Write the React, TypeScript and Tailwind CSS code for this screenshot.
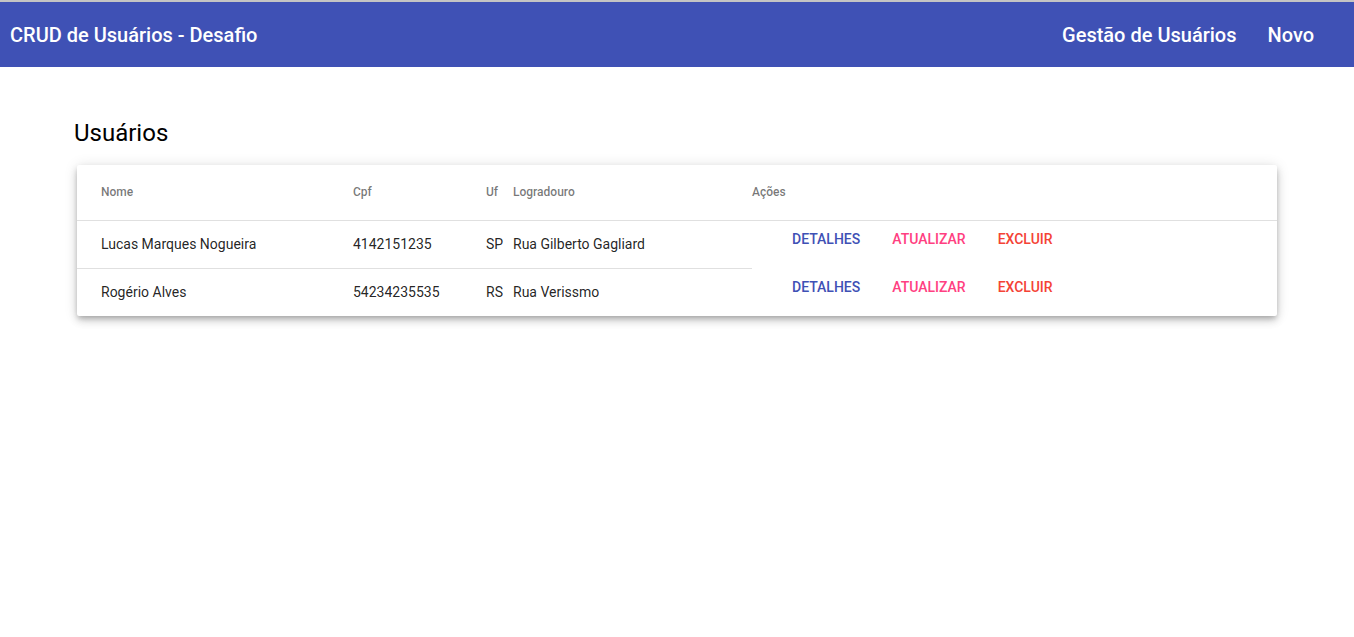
import React from "react";

interface Usuario {
  id: number;
  nome: string;
  cpf: string;
  uf: string;
  logradouro: string;
}

const usuarios: Usuario[] = [
  { id: 1, nome: "Lucas Marques Nogueira", cpf: "4142151235", uf: "SP", logradouro: "Rua Gilberto Gagliard" },
  { id: 2, nome: "Rogério Alves", cpf: "54234235535", uf: "RS", logradouro: "Rua Verissmo" },
];

const App = () => {
  return (
    <div className="min-h-screen bg-white font-['Roboto','Liberation_Sans',sans-serif]">
      {/* app bar */}
      <div className="border-t-2 border-[#c4c4c4] bg-[#3f51b5] h-[67px] flex items-center justify-between pl-[10px] pr-[40px] text-white">
        <span className="text-[20px] font-medium leading-none">CRUD de Usuários - Desafio</span>
        <nav className="flex items-center gap-[31px] text-[20px] font-medium leading-none">
          <span>Gestão de Usuários</span>
          <span>Novo</span>
        </nav>
      </div>

      <div className="pl-[74px] pt-[53px]">
        <h1 className="text-[24px] leading-[26px] text-black">Usuários</h1>
      </div>

      <div className="ml-[77px] mt-[19px] w-[1200px] bg-white rounded-[2px] shadow-[0_3px_5px_-1px_rgba(0,0,0,0.2),0_5px_8px_0_rgba(0,0,0,0.14),0_1px_14px_0_rgba(0,0,0,0.12)]">
        <table className="w-full table-fixed border-collapse">
          <colgroup>
            <col className="w-[276px]" />
            <col className="w-[133px]" />
            <col className="w-[27px]" />
            <col className="w-[239px]" />
            <col />
          </colgroup>
          <thead>
            <tr className="h-[55px] border-b border-[#e0e0e0] text-left text-[12px] font-medium text-[rgba(0,0,0,0.54)]">
              <th className="pl-6 font-medium">Nome</th>
              <th className="font-medium">Cpf</th>
              <th className="font-medium">Uf</th>
              <th className="font-medium">Logradouro</th>
              <th className="font-medium">Ações</th>
            </tr>
          </thead>
          <tbody className="text-[14px] text-[rgba(0,0,0,0.87)]">
            {usuarios.map((u, i) => (
              <tr key={u.id} className="h-[48px]">
                <td className={"pl-6 " + (i === 0 ? "border-b border-[#e0e0e0]" : "")}>{u.nome}</td>
                <td className={i === 0 ? "border-b border-[#e0e0e0]" : ""}>{u.cpf}</td>
                <td className={i === 0 ? "border-b border-[#e0e0e0]" : ""}>{u.uf}</td>
                <td className={i === 0 ? "border-b border-[#e0e0e0]" : ""}>{u.logradouro}</td>
                <td className="align-top pl-6 pt-px">
                  <div className="flex">
                    <button className="h-9 px-4 text-[14px] font-medium uppercase text-[#3f51b5]">Detalhes</button>
                    <button className="h-9 px-4 text-[14px] font-medium uppercase text-[#ff4081]">Atualizar</button>
                    <button className="h-9 px-4 text-[14px] font-medium uppercase text-[#f44336]">Excluir</button>
                  </div>
                </td>
              </tr>
            ))}
          </tbody>
        </table>
      </div>
    </div>
  );
};

export default App;
